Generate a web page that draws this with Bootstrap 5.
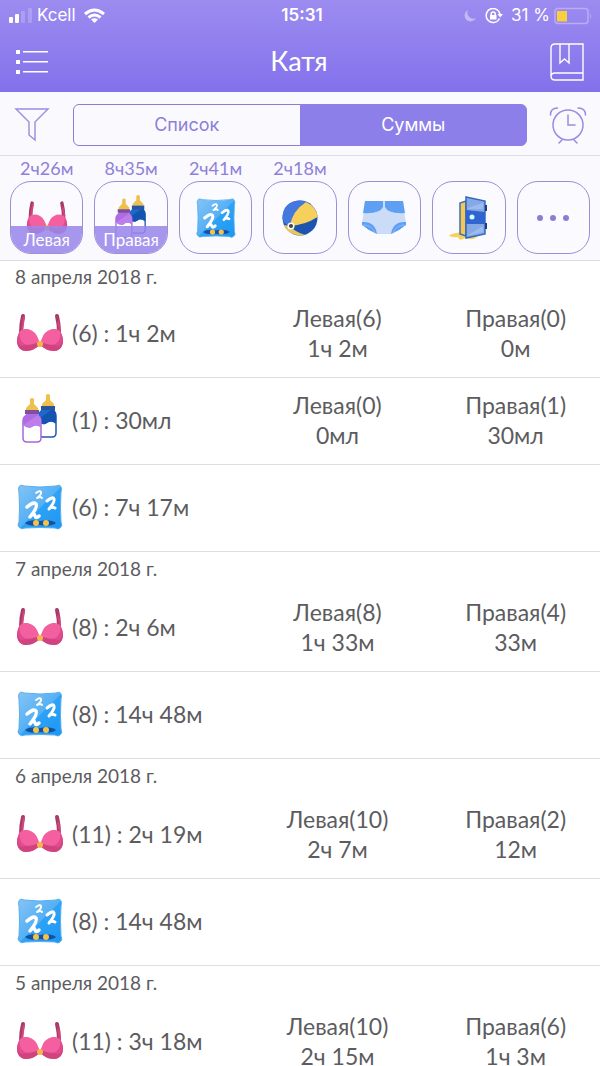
<!DOCTYPE html>
<html lang="ru">
<head>
<meta charset="utf-8">
<meta name="viewport" content="width=device-width, initial-scale=1">
<title>Катя</title>
<link href="https://cdn.jsdelivr.net/npm/bootstrap@5.3.0/dist/css/bootstrap.min.css" rel="stylesheet">
<style>
  :root { --violet: #8d7fea; --line: #dedee2; --ink: #5c5c60; }
  body { font-family: Lato, "Open Sans", sans-serif; color: var(--ink); background: #fff; }
  svg { display: block; flex: none; }
  .top { background: linear-gradient(#9c8cf0, #8371eb); color: #fff; }
  .status { height: 31px; font-family: Inter, "Liberation Sans", sans-serif; font-size: 17px; }
  .status-side { flex: 1 1 0; }
  .titlebar { height: 61px; padding: 0 15px; }
  .titlebar h1 { font-size: 27px; font-weight: 400; }
  .icon-btn { padding: 0; border: 0; background: none; color: inherit; }
  .tint { background: #faf9fe; border-bottom: 1px solid var(--line); }
  .filters { height: 64px; padding: 2px 13px 0; gap: 22px; color: #9a8ce0; }
  .segments { height: 42px; }
  .segments .btn {
    --bs-btn-color: #8d7fd8; --bs-btn-border-color: #8d7fd0; --bs-btn-font-size: 18px; --bs-btn-font-family: Roboto, "Liberation Sans", sans-serif;
    --bs-btn-active-bg: var(--violet); --bs-btn-active-border-color: var(--violet); --bs-btn-active-color: #fff;
    --bs-btn-border-width: 1px; --bs-btn-border-radius: 6px; --bs-btn-padding-y: 0;
    flex: 1 1 0; display: flex; align-items: center; justify-content: center;
    font-family: Inter, "Liberation Sans", sans-serif;
  }
  .tiles { display: grid; grid-template-columns: repeat(7, 1fr); gap: 11px; padding: 0 10px 6px; }
  .tile-time { height: 25px; line-height: 24px; font-size: 18px; color: #8f81d8; text-align: center; }
  .tile {
    position: relative; display: flex; align-items: center; justify-content: center;
    width: 100%; height: 73px; padding: 0; overflow: hidden;
    background: #fbfaff; border: 1px solid #9d8fd6; border-radius: 21px; color: #8d7dd2;
  }
  .tile-tag {
    position: absolute; left: 0; right: 0; bottom: 0; height: 27px; line-height: 27px;
    background: #9a88eae0; color: #fff; font-size: 17px;
  }
  .day { height: 33px; line-height: 34px; margin: 0; padding-left: 15px; font-size: 19px; font-weight: 400; }
  .day-first { height: 30px; line-height: 32px; }
  .sum {
    display: grid; grid-template-columns: 13fr 10fr 9fr; align-items: center;
    height: 87px; padding-bottom: 3px; border-bottom: 1px solid var(--line); font-size: 23px; line-height: 30px; text-align: center;
  }
  .total { display: flex; align-items: center; gap: 8px; padding-left: 16px; white-space: nowrap; }
</style>
</head>
<body>
<svg width="0" height="0" class="position-absolute" aria-hidden="true">
  <defs>
    <linearGradient id="gp" x2="1" y2="1"><stop stop-color="#86c4f4"/><stop offset=".5" stop-color="#55b0f5"/><stop offset=".52" stop-color="#2da2f6"/><stop offset="1" stop-color="#1e96f2"/></linearGradient>
  </defs>
  <symbol id="bra" viewBox="0 0 48 48">
    <path d="M7 7Q5 15 5 24" fill="none" stroke="#a83c68" stroke-width="4" stroke-linecap="round"/>
    <path d="M41 7Q43 15 43 24" fill="none" stroke="#a83c68" stroke-width="4" stroke-linecap="round"/>
    <path d="M8 8Q7 14 6 22M42 12Q43 16 44 22" fill="none" stroke="#d6437f" stroke-width="2"/>
    <path d="M2 26C4 18 16 18 21 27L24 34L27 27C32 18 44 18 46 26C49 34 45 42 38 42C32 42 28 39 24 36C20 39 16 42 10 42C3 42-1 34 2 26Z" fill="#f4609f"/>
    <path d="M2 27C1 36 8 38 21 34L24 33L27 34C40 38 47 36 46 27C49 35 45 42 38 42C32 42 28 39 24 36C20 39 16 42 10 42C3 42-1 35 2 27Z" fill="#cf447f"/>
    <path d="M4 23C3 30 6 35 12 36L5 37C0 33 1 27 4 23ZM44 23C45 30 42 35 36 36L43 37C48 33 47 27 44 23Z" fill="#e04b90"/>
    <circle cx="24" cy="35" r="3" fill="#f4b64a"/>
  </symbol>
  <symbol id="bottles" viewBox="0 3 48 52">
    <path d="M26 20Q23 21 23 25V42Q23 46 27 46H36Q40 46 40 42V25Q40 21 37 20Z" fill="#fff" stroke="#2557ae" stroke-width="1.500"/>
    <path d="M26 17H37L40 23V33Q35 29 31 32Q27 35 23 31V23Z" fill="#1d69cb"/>
    <path d="M23 28L38 17L40 23V32Q35 29 31 32Q27 35 23 31Z" fill="#1553b0"/>
    <path d="M30 4Q32 2 34 4L34 9L38 13V15H26V13L30 9Z" fill="#f0c04d"/><path d="M25 15H39V19H25Z" fill="#28569c"/>
    <path d="M11 24Q7 26 7 30V47Q7 51 11 51H21Q25 51 25 47V30Q25 26 21 24Z" fill="#fff" stroke="#a967d8" stroke-width="1.500"/>
    <path d="M11 22H21L25 28V36Q19 33 16 36Q12 38 7 34V28Z" fill="#b06be2"/>
    <path d="M7 34L22 24L25 28V36Q19 33 16 36Q12 38 7 34Z" fill="#bd7deb"/>
    <path d="M14 8Q16 6 18 8L18 13L22 17V20H10V17L14 13Z" fill="#f0c04d"/><path d="M9 19H23V23H9Z" fill="#7d4fa0"/>
  </symbol>
  <symbol id="pillow" viewBox="0 0 48 48">
    <path d="M3 4Q4 1 8 3Q24 5 40 3Q44 1 45 4Q46 6 45 9Q44 24 45 39Q47 43 44 45Q42 47 39 45Q24 44 9 45Q5 47 3 44Q1 42 3 39Q4 24 3 9Q2 6 3 4Z" fill="url(#gp)" stroke="#55aef0" stroke-width="1"/>
    <g fill="none" stroke="#fff" stroke-linecap="round" stroke-linejoin="round">
      <path d="M20 10Q24 7 25 9Q26 11 21 15Q25 13 26 15" stroke-width="2"/>
      <path d="M31 18Q37 13 38 16Q39 19 33 26Q35 23 39 25" stroke-width="3"/>
      <path d="M11 24Q18 18 20 21Q22 24 14 34Q18 29 19 33Q20 36 23 33" stroke-width="3.500"/>
    </g>
    <path d="M9 40Q14 36 24 38Q35 36 40 40Q35 44 24 42Q14 44 9 40Z" fill="#14519f"/>
    <circle cx="20" cy="40" r="3" fill="#f3c24c"/><circle cx="30" cy="40" r="3" fill="#f3c24c"/>
  </symbol>
</svg>

<header class="top">
  <div class="status d-flex align-items-center px-2">
    <div class="status-side d-flex align-items-center">
      <svg width="25" height="16" viewBox="0 0 25 16" fill="#fff"><rect x="1" y="9" width="4" height="6" rx="1"/><rect x="7" y="6" width="4" height="9" rx="1"/><rect x="13" y="3" width="4" height="12" rx="1" opacity=".2"/><rect x="20" y="0" width="4" height="15" rx="1" opacity=".2"/></svg>
      <span class="ms-1">Kcell</span>
      <svg class="ms-2" width="21" height="16" viewBox="0 0 21 16" fill="none" stroke="#fff" stroke-width="3"><path d="M1 6Q10.500-2 20 6M4.500 9.500Q10.500 4.500 16.500 9.500"/><path d="M10.500 15L7 11.500Q10.500 9 14 11.500Z" fill="#fff" stroke="none"/></svg>
    </div>
    <span class="fw-semibold ps-1">15:31</span>
    <div class="status-side d-flex align-items-center justify-content-end">
      <svg width="14" height="14" viewBox="0 0 14 14" fill="#c3b8f5"><path d="M5 1A6 6 0 1 0 13 9A6 6 0 0 1 5 1Z"/></svg>
      <svg class="ms-2" width="18" height="16" viewBox="0 0 18 16" fill="none" stroke="#fff" stroke-width="1.500"><path d="M14.500 10.500A7 7 0 1 1 15 6"/><path d="M12.500 6H18L15.200 9.500Z" fill="#fff" stroke="none"/><rect x="5" y="7" width="6.500" height="4.500" fill="#fff" stroke="none"/><path d="M6.200 7V6Q6.200 4 8.200 4T10.200 6V7"/></svg>
      <span class="ms-2">31&nbsp;%</span>
      <svg class="ms-1" width="38" height="18" viewBox="0 0 38 18"><rect x="1" y="1.500" width="33" height="15" rx="3" fill="none" stroke="#b9adf3" stroke-width="1.500"/><rect x="3" y="4" width="10" height="10.500" fill="#f8d03f"/><path d="M36 6Q38 9 36 12Z" fill="#b9adf3"/></svg>
    </div>
  </div>
  <nav class="titlebar d-flex align-items-center justify-content-between">
    <button class="icon-btn" type="button" aria-label="Меню"><svg width="34" height="28" viewBox="0 0 34 28" fill="#fff"><path d="M1 2h4v4H1zM1 12h4v4H1zM1 22h4v4H1zM8 3h25v1.500H8zM8 13h25v1.500H8zM8 23h25v1.500H8z"/></svg></button>
    <h1 class="m-0">Катя</h1>
    <button class="icon-btn" type="button" aria-label="Дневник"><svg width="36" height="38" viewBox="0 0 36 38" fill="none" stroke="#fff" stroke-width="1.400"><path d="M34 1H6Q2 1 2 5V33Q2 37 6 37H34ZM2 34Q2 30 6 30H34M11 1V20L15.500 16L20 20V1"/></svg></button>
  </nav>
</header>

<main>
  <section class="tint filters d-flex align-items-center">
    <button class="icon-btn" type="button" aria-label="Фильтр"><svg width="38" height="36" viewBox="0 0 38 36" fill="none" stroke="currentColor" stroke-width="1.400"><path d="M3 2H35L22 15V33L16 28V15Z"/></svg></button>
    <div class="segments btn-group flex-grow-1" role="group" aria-label="Вид">
      <input class="btn-check" type="radio" name="view" id="v-list"><label class="btn" for="v-list">Список</label>
      <input class="btn-check" type="radio" name="view" id="v-sums" checked><label class="btn" for="v-sums">Суммы</label>
    </div>
    <button class="icon-btn" type="button" aria-label="Будильник"><svg width="38" height="38" viewBox="0 0 38 38" fill="none" stroke="currentColor" stroke-width="1.500" stroke-linecap="round"><circle cx="19" cy="19" r="15"/><path d="M19 9V19H26M13 34L10 37M25 34L28 37M1.500 9Q1.500 2 8.500 2M29 2Q36.500 2 36.500 9"/></svg></button>
  </section>

  <section class="tint tiles">
    <div><div class="tile-time">2ч26м</div><button class="tile" type="button"><svg width="42" height="42"><use href="#bra"/></svg><span class="tile-tag">Левая</span></button></div>
    <div><div class="tile-time">8ч35м</div><button class="tile" type="button"><svg width="44" height="46"><use href="#bottles"/></svg><span class="tile-tag">Правая</span></button></div>
    <div><div class="tile-time">2ч41м</div><button class="tile" type="button" aria-label="Сон"><svg width="42" height="42"><use href="#pillow"/></svg></button></div>
    <div><div class="tile-time">2ч18м</div><button class="tile" type="button" aria-label="Игра"><svg width="38" height="38" viewBox="0 0 38 38"><circle cx="19" cy="19" r="17.500" fill="#1c55b0"/><path d="M9 27Q2 25 1.500 19Q2 2 19 1.500Q22 1.500 25 3Q11 12 9 27Z" fill="#4379de"/><path d="M9 27Q11 12 25 3Q36 8 36.500 18Q24 26 9 27Z" fill="#f7d05b"/><path d="M9 27Q14 33 24 36Q16 37.500 10 34Q5 31 3 26Z" fill="#eac65a"/><circle cx="10" cy="27" r="2.800" fill="#444" stroke="#fff" stroke-width="1.500"/></svg></button></div>
    <div><div class="tile-time"></div><button class="tile" type="button" aria-label="Подгузник"><svg width="44" height="36" viewBox="0 0 44 36"><path d="M3 1H41L44 24L30 34H15L0 24Z" fill="#cbdcf8"/><path d="M3 1H21V7Q18 14 1 13ZM23 1H41L43 13Q26 14 23 7ZM0 22Q13 21 15 34Q7 31 0 25ZM44 22Q31 21 29 34Q37 31 44 25Z" fill="#5e9ff4"/><path d="M1 25Q10 25 13 33M43 25Q34 25 31 33" fill="none" stroke="#8dbaf6"/></svg></button></div>
    <div><div class="tile-time"></div><button class="tile" type="button" aria-label="Прогулка"><svg width="40" height="46" viewBox="0 0 40 46"><path d="M0 40Q10 36 20 38Q34 38 29 41Q25 46 16 43Q10 47 9 42Q2 43 0 40Z" fill="#f6d15c"/><path d="M11 39V8L17 6V41Z" fill="#f2c955" stroke="#3e6db5" stroke-width="1.500"/><path d="M17 2L36 6V39L17 43Z" fill="#86a9e6" stroke="#3569bb" stroke-width="1.500"/><path d="M17 15L36 17V29L17 29Z" fill="#2e65d0"/><path d="M19 13L34 8V14L19 14ZM19 40L34 31V37L19 41Z" fill="#9bbaf0"/><path d="M36 10h2v6h-2zM36 28h2v6h-2z" fill="#1b3d82"/><circle cx="23" cy="22" r="2.500" fill="#d8ffff"/></svg></button></div>
    <div><div class="tile-time"></div><button class="tile" type="button" aria-label="Ещё"><svg width="34" height="8" viewBox="0 0 34 8" fill="currentColor"><circle cx="4" cy="4" r="3"/><circle cx="17" cy="4" r="3"/><circle cx="30" cy="4" r="3"/></svg></button></div>
  </section>

  <section>
    <h2 class="day day-first">8 апреля 2018 г.</h2>
    <div class="sum"><div class="total"><svg width="48" height="48"><use href="#bra"/></svg>(6) : 1ч 2м</div><div>Левая(6)<br>1ч 2м</div><div>Правая(0)<br>0м</div></div>
    <div class="sum"><div class="total"><svg width="48" height="54"><use href="#bottles"/></svg>(1) : 30мл</div><div>Левая(0)<br>0мл</div><div>Правая(1)<br>30мл</div></div>
    <div class="sum"><div class="total"><svg width="48" height="48"><use href="#pillow"/></svg>(6) : 7ч 17м</div></div>
  </section>
  <section>
    <h2 class="day">7 апреля 2018 г.</h2>
    <div class="sum"><div class="total"><svg width="48" height="48"><use href="#bra"/></svg>(8) : 2ч 6м</div><div>Левая(8)<br>1ч 33м</div><div>Правая(4)<br>33м</div></div>
    <div class="sum"><div class="total"><svg width="48" height="48"><use href="#pillow"/></svg>(8) : 14ч 48м</div></div>
  </section>
  <section>
    <h2 class="day">6 апреля 2018 г.</h2>
    <div class="sum"><div class="total"><svg width="48" height="48"><use href="#bra"/></svg>(11) : 2ч 19м</div><div>Левая(10)<br>2ч 7м</div><div>Правая(2)<br>12м</div></div>
    <div class="sum"><div class="total"><svg width="48" height="48"><use href="#pillow"/></svg>(8) : 14ч 48м</div></div>
  </section>
  <section>
    <h2 class="day">5 апреля 2018 г.</h2>
    <div class="sum"><div class="total"><svg width="48" height="48"><use href="#bra"/></svg>(11) : 3ч 18м</div><div>Левая(10)<br>2ч 15м</div><div>Правая(6)<br>1ч 3м</div></div>
  </section>
</main>
<script src="https://cdn.jsdelivr.net/npm/bootstrap@5.3.0/dist/js/bootstrap.bundle.min.js"></script>
</body>
</html>
